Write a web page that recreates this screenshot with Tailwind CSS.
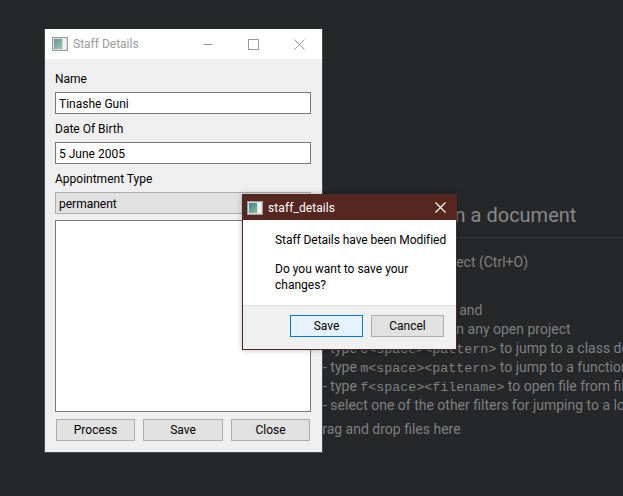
<!DOCTYPE html>
<html>
<head>
<meta charset="utf-8">
<script src="https://cdn.jsdelivr.net/npm/@tailwindcss/browser@4"></script>
</head>
<body class="m-0 overflow-hidden">
<div class="relative w-[623px] h-[496px] bg-[#262729] overflow-hidden font-['Roboto',sans-serif] text-[12px]">

  <!-- background application -->
  <div class="pt-[202px] pl-[313px] text-[#7e8081] text-[14px] leading-[19px]">
    <div class="pl-[106px] h-[36px] text-[20px] leading-[26px] text-[#85888a] border-b border-[#343537]">Open a document</div>
    <div class="pl-[10px] pt-[15px] flex flex-col whitespace-nowrap">
      <div class="-ml-[5px]">- Open an existing project (Ctrl+O)</div>
      <div class="mt-[29px]">- Use the Locator tool and</div>
      <div class="-ml-[7px]">- type to jump to a file in any open project</div>
      <div class="h-[19px]">- type <span class="font-['Liberation_Mono',monospace] text-[13.33px] leading-[1]">c&lt;space&gt;&lt;pattern&gt;</span> to jump to a class definition</div>
      <div class="h-[19px]">- type <span class="font-['Liberation_Mono',monospace] text-[13.33px] leading-[1]">m&lt;space&gt;&lt;pattern&gt;</span> to jump to a function definition</div>
      <div class="h-[19px]">- type <span class="font-['Liberation_Mono',monospace] text-[13.33px] leading-[1]">f&lt;space&gt;&lt;filename&gt;</span> to open file from file system</div>
      <div>- select one of the other filters for jumping to a location</div>
      <div class="mt-[5px] -ml-[10px]">Drag and drop files here</div>
    </div>
  </div>

  <!-- Staff Details window -->
  <div class="absolute left-[44px] top-[29px] w-[279px] h-[424px] flex flex-col bg-[#efefef] border border-[#4a4b4c] border-t-0 text-black">
    <div class="h-[30px] shrink-0 bg-white flex items-center pl-[7px] text-[#9a9a9a]">
      <svg width="16" height="14" viewBox="0 0 16 14" class="shrink-0">
        <defs><linearGradient id="g1" x1="0" y1="0" x2="0.6" y2="1"><stop offset="0" stop-color="#3f7f96"/><stop offset="1" stop-color="#7fb58f"/></linearGradient></defs>
        <rect x="0.5" y="0.5" width="15" height="13" fill="#d8dcdc" stroke="#9aa0a2"/>
        <rect x="2" y="2" width="8" height="10" fill="url(#g1)" opacity="0.75"/>
        <rect x="11" y="2" width="3" height="10" fill="#f2f4f4"/>
      </svg>
      <span class="ml-[5px]">Staff Details</span>
      <div class="ml-auto flex items-center">
        <svg width="10" height="10" viewBox="0 0 10 10" class="mr-[35px]"><path d="M0 5.5H10" stroke="#9a9a9a"/></svg>
        <svg width="11" height="11" viewBox="0 0 11 11" class="mr-[35px]"><rect x="0.5" y="0.5" width="10" height="10" fill="none" stroke="#9a9a9a"/></svg>
        <svg width="11" height="11" viewBox="0 0 11 11" class="mr-[17px]"><path d="M0.5 0.5L10.5 10.5M10.5 0.5L0.5 10.5" stroke="#9a9a9a"/></svg>
      </div>
    </div>
    <div class="flex-1 flex flex-col gap-[6px] pt-[11px] pb-[11px] pl-[10px] pr-[11px]">
      <div class="h-[16px] leading-[18px]">Name</div>
      <div class="h-[22px] border border-[#7a7a7a] bg-white leading-[22px] px-[3px]">Tinashe Guni</div>
      <div class="h-[16px] leading-[18px]">Date Of Birth</div>
      <div class="h-[22px] border border-[#7a7a7a] bg-white leading-[22px] px-[3px]">5 June 2005</div>
      <div class="h-[16px] leading-[18px]">Appointment Type</div>
      <div class="h-[22px] border border-[#adadad] bg-[#e1e1e1] leading-[22px] px-[3px]">permanent</div>
      <div class="flex-1 border border-[#7a7a7a] bg-white"></div>
      <div class="mt-[1px] flex justify-between px-[1px]">
        <button class="w-[79px] h-[22px] border border-[#adadad] bg-[#e1e1e1]">Process</button>
        <button class="w-[80px] h-[22px] border border-[#adadad] bg-[#e1e1e1]">Save</button>
        <button class="w-[79px] h-[22px] border border-[#adadad] bg-[#e1e1e1]">Close</button>
      </div>
    </div>
  </div>

  <!-- Message dialog -->
  <div class="absolute left-[242px] top-[194px] w-[215px] h-[156px] flex flex-col border border-[#4a2a24] bg-white text-black shadow-[0_0_6px_rgba(0,0,0,0.25)]">
    <div class="h-[25px] shrink-0 bg-[#56271e] flex items-center pl-[4px] text-white">
      <svg width="16" height="14" viewBox="0 0 16 14" class="shrink-0">
        <defs><linearGradient id="g2" x1="0" y1="0" x2="0.6" y2="1"><stop offset="0" stop-color="#3f7f96"/><stop offset="1" stop-color="#7fb58f"/></linearGradient></defs>
        <rect x="0.5" y="0.5" width="15" height="13" fill="#d8dcdc" stroke="#9aa0a2"/>
        <rect x="2" y="2" width="8" height="10" fill="url(#g2)"/>
        <rect x="11" y="2" width="3" height="10" fill="#f2f4f4"/>
      </svg>
      <span class="ml-[5px] tracking-[0.08px]">staff_details</span>
      <svg width="11" height="11" viewBox="0 0 11 11" class="ml-auto mr-[10px]"><path d="M0.5 0.5L10.5 10.5M10.5 0.5L0.5 10.5" stroke="#ffffff" stroke-width="1.2"/></svg>
    </div>
    <div class="h-[85px] shrink-0 pl-[32px] pt-[12px] leading-[16px] whitespace-nowrap">
      <div class="tracking-[-0.06px]">Staff Details have been Modified</div>
      <div class="mt-[13px]">Do you want to save your<br>changes?</div>
    </div>
    <div class="flex-1 bg-[#f0f0f0] border-t border-[#dfdfdf] flex justify-end gap-[8px] pt-[9px] pr-[12px]">
      <button class="w-[73px] h-[22px] border border-[#0078d7] bg-[#e5f1fb]">Save</button>
      <button class="w-[73px] h-[22px] border border-[#adadad] bg-[#e1e1e1]">Cancel</button>
    </div>
  </div>
</div>
</body>
</html>
